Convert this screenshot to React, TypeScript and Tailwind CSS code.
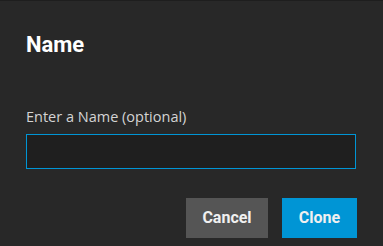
export default function App() {
  return (
    <div className="w-[383px] h-[246px] bg-[#282828] border-t border-[#1e1e1e] flex flex-col px-[26px]" style={{ fontFamily: "Roboto, 'Open Sans', sans-serif" }}>
      <h1 className="text-[22px] font-bold text-white leading-none mt-[33px]">Name</h1>
      <label className="mt-[54px] text-[14.5px] text-[#d4d4d4] leading-none" style={{ fontFamily: "'Open Sans', sans-serif" }}>Enter a Name (optional)</label>
      <input className="mt-[9px] w-[330px] h-[35px] bg-[#1f1f1f] border border-[#0095d5] outline-none text-white px-2" />
      <div className="flex justify-end gap-[14px] mt-[29px]">
        <button className="w-[82px] h-[40px] bg-[#555555] text-[#f0f0f0] font-bold text-[16px]">Cancel</button>
        <button className="w-[75px] h-[40px] bg-[#0095d5] text-[#f0f0f0] font-bold text-[16px]">Clone</button>
      </div>
    </div>
  );
}
